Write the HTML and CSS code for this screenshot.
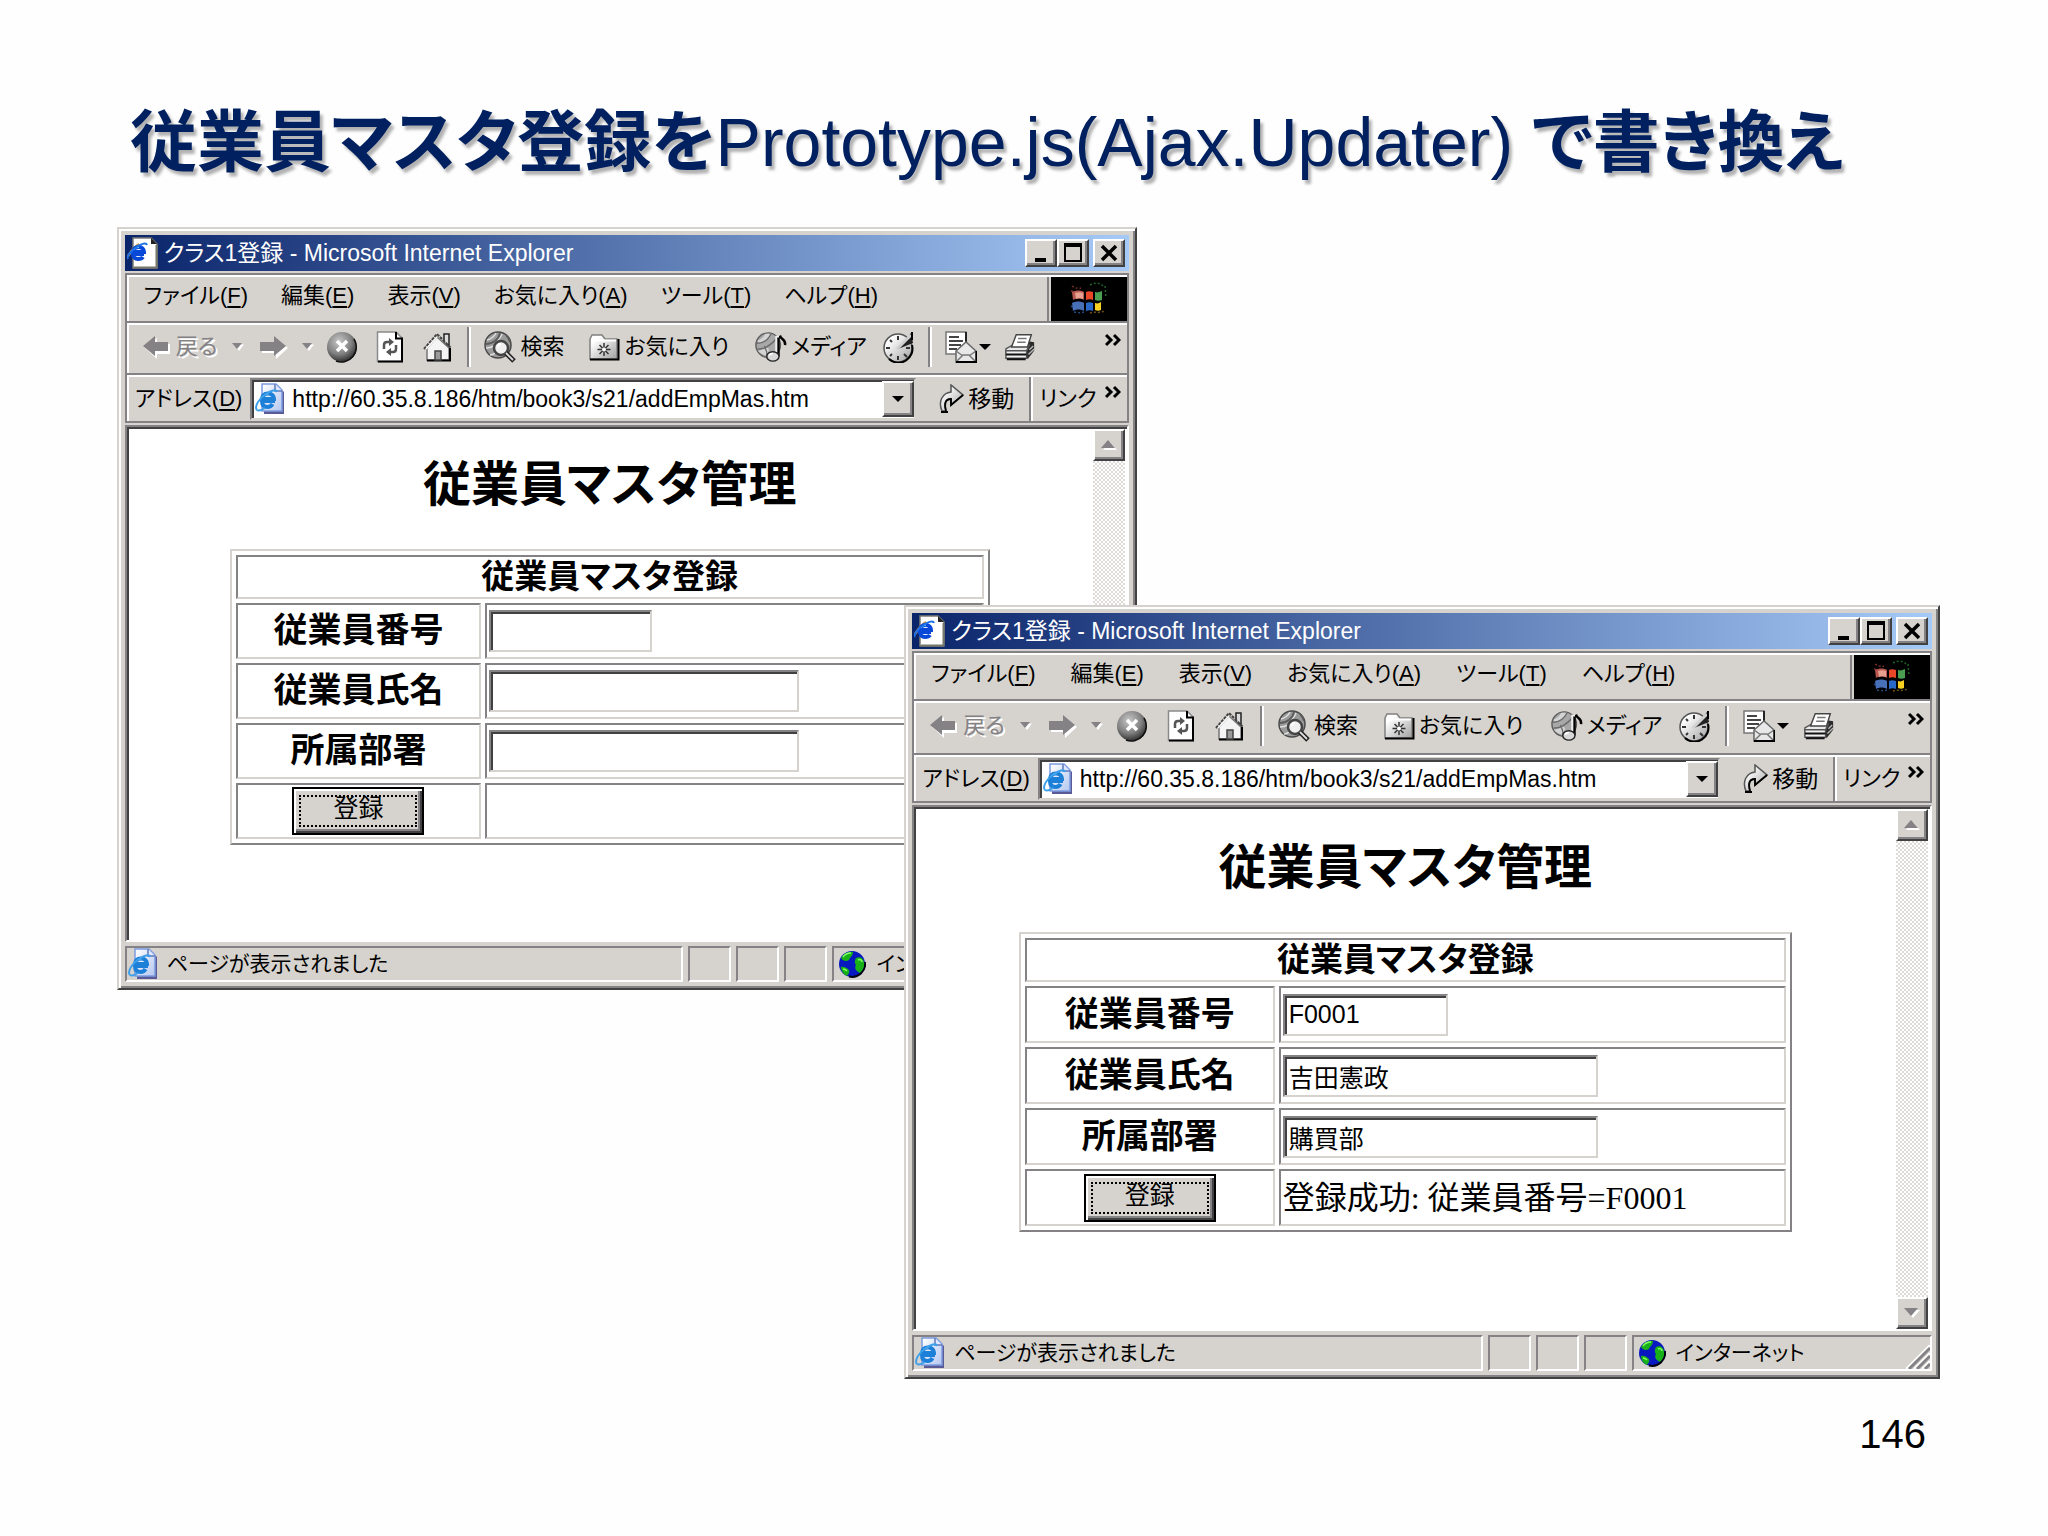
FILE: index.html
```
<!DOCTYPE html>
<html lang="ja">
<head>
    <meta charset="UTF-8">
    <meta name="viewport" content="width=device-width, initial-scale=1.0">
    <title>従業員マスタ登録をPrototype.js(Ajax.Updater) で書き換え</title>
    <link rel="stylesheet" href="styles.css">
</head>
<body>
    <!-- アイコン定義 -->
    <svg class="icon-defs" aria-hidden="true">
        <defs>
            <radialGradient id="ball" cx="40%" cy="32%" r="70%">
                <stop offset="0" stop-color="#c8c8c8"/>
                <stop offset="0.6" stop-color="#808080"/>
                <stop offset="1" stop-color="#2c2c2c"/>
            </radialGradient>
            <linearGradient id="metal" x1="0" y1="0" x2="1" y2="1">
                <stop offset="0.2" stop-color="#ffffff"/>
                <stop offset="1" stop-color="#a0a0a0"/>
            </linearGradient>
            <linearGradient id="sheet" x1="0" y1="0" x2="1" y2="1">
                <stop offset="0" stop-color="#ffffff"/>
                <stop offset="1" stop-color="#b4c6f0"/>
            </linearGradient>
        </defs>
        <symbol id="i-ie" viewBox="0 0 32 32">
            <path d="M10 3h14l6 6v22H10z" fill="#5a5a96"/>
            <path d="M8 1h14l6 6v21H8z" fill="url(#sheet)" stroke="#7c9ce0" stroke-width="1.5"/>
            <path d="M21 1v7h7" fill="#dfe8ff" stroke="#6078b8" stroke-width="1.5"/>
            <path d="M21 18H8c0 4 2 6 5.500 6 2.500 0 4-1 5-3M8 17c0-4 2-6.500 6-6.500s6 2.500 6 5.500H9" fill="none" stroke="#1c7fd8" stroke-width="4"/>
            <path d="M9 14c1-2.500 3-3.500 5.500-3.300" fill="none" stroke="#6cc4ff" stroke-width="1.5"/>
            <path d="M3 27c-3-3 2-12 9-16 5-3.500 10-5 11-2" fill="none" stroke="#3fa0ea" stroke-width="2"/>
            <path d="M3 27c2 1.500 5 0 8-2" fill="none" stroke="#3fa0ea" stroke-width="2"/>
        </symbol>
        <symbol id="i-page" viewBox="0 0 32 32">
            <path d="M6 1h18l6 6v24H6z" fill="#fff" stroke="#7b7b70" stroke-width="1.5"/>
            <path d="M7 30.500h23M29.500 8v22" stroke="#77776a" stroke-width="2"/>
            <path d="M24 1v6h6z" fill="#222"/>
            <path d="M1 19l5-7 6-5" fill="none" stroke="#c89040" stroke-width="2.500"/>
            <path d="M17 17H6c0 3 2 5 5 5 2 0 4-.5 5-2M6 16c0-3.500 2-6 5.500-6s5.500 2 5.500 5H7" fill="none" stroke="#0848d8" stroke-width="4"/>
            <path d="M7 13c1-2 3-3 5-2.500" fill="none" stroke="#5ac0ff" stroke-width="1.5"/>
            <path d="M1 22c-2-3 5-10 10-13 4-2 8-4 9-1" fill="none" stroke="#1c70e8" stroke-width="2"/>
        </symbol>
        <symbol id="i-back" viewBox="0 0 28 24">
            <path d="M2 13L14 3v6h13v10H14v5z" fill="#fff"/>
            <path d="M0 11L12 1v6h13v9H12v5z" fill="#848284"/>
        </symbol>
        <symbol id="i-forward" viewBox="0 0 28 24">
            <path d="M28 13L16 3v6H2v9h14v6z" fill="#fff"/>
            <path d="M26 11L14 1v6H0v9h14v5z" fill="#848284"/>
        </symbol>
        <symbol id="i-caret-off" viewBox="0 0 12 8">
            <path d="M2 1.500h10L7 8z" fill="#fff"/>
            <path d="M0 0h10L5 6z" fill="#848284"/>
        </symbol>
        <symbol id="i-caret" viewBox="0 0 12 8">
            <path d="M0 1h12L6 7z" fill="#000"/>
        </symbol>
        <symbol id="i-stop" viewBox="0 0 32 32">
            <circle cx="16" cy="16" r="15" fill="url(#ball)"/>
            <path d="M28 8a15 15 0 0 1-18 22" fill="none" stroke="#111" stroke-width="1.5"/>
            <path d="M11 10l10 10M21 10L11 20" stroke="#fff" stroke-width="3.500"/>
        </symbol>
        <symbol id="i-refresh" viewBox="0 0 28 32">
            <path d="M1.500 1H20l6 6v23.500H1.500z" fill="#fff" stroke="#8a8a8a" stroke-width="1.500"/>
            <path d="M20 1v6.500h6v23H2" fill="none" stroke="#000" stroke-width="2"/>
            <path d="M8 18v-4c0-2 1-3 3-3h3M20 14v4c0 2-1 3-3 3h-3" fill="none" stroke="#555" stroke-width="2.500"/>
            <path d="M13 7l5 4-5 4zM15 17l-5 4 5 4z" fill="#555"/>
        </symbol>
        <symbol id="i-home" viewBox="0 0 30 32">
            <path d="M21 3h5v11h-5z" fill="#ddd" stroke="#222" stroke-width="1.5"/>
            <path d="M4 17L14 6l12 11v12H4z" fill="#f4f4f4" stroke="#777" stroke-width="1.5"/>
            <path d="M4 29.500h23V17" fill="none" stroke="#000" stroke-width="2"/>
            <path d="M1 18L14 3l14 14" fill="none" stroke="#444" stroke-width="2" stroke-dasharray="3 1"/>
            <path d="M3 18L14 6" stroke="#fff" stroke-width="1.5"/>
            <path d="M12 20h6v9h-6z" fill="#999" stroke="#444" stroke-width="1.500"/>
        </symbol>
        <symbol id="i-search" viewBox="0 0 32 32">
            <circle cx="14" cy="14" r="13" fill="#9a9a9a" stroke="#4a4a4a" stroke-width="1.500"/>
            <path d="M3 9c4-1 7-3 9-7M2 17c4 0 6-1 8-2M6 24c2 0 4-1 5-2M18 3c-1 3-3 5-5 7" fill="none" stroke="#e0e0e0" stroke-width="1.500"/>
            <path d="M2 13c7 0 13-5 14-11M22 4c2 2 3 4 4 7" fill="none" stroke="#5c5c5c" stroke-width="1.800"/>
            <circle cx="17" cy="17" r="7" fill="#f0f0f0" stroke="#444" stroke-width="2.500"/>
            <path d="M14 16c0-2 1-3 3-3" fill="none" stroke="#fff" stroke-width="2"/>
            <path d="M22 22l8 8" stroke="#222" stroke-width="5"/>
            <path d="M22 22l7 7" stroke="#ddd" stroke-width="1.800"/>
        </symbol>
        <symbol id="i-folder" viewBox="0 0 32 28">
            <path d="M2 6l2-4h10l3 4h12v20H2z" fill="url(#metal)" stroke="#808080" stroke-width="1.500"/>
            <path d="M2 26.500h28.500V6" fill="none" stroke="#000" stroke-width="2"/>
            <path d="M3 7.500h25" stroke="#fff" stroke-width="2"/>
            <path d="M16 10v13M9.500 16.500h13M11.500 12l9 9M20.500 12l-9 9" stroke="#333" stroke-width="1.500"/>
            <circle cx="16" cy="16.500" r="2" fill="#fff"/>
        </symbol>
        <symbol id="i-media" viewBox="0 0 34 32">
            <circle cx="14" cy="14" r="13" fill="#a8a8a8" stroke="#5c5c5c" stroke-width="1.500"/>
            <path d="M3 9c3-1 6-3 8-7h6c0 5-6 9-14 10zM3 20c3 0 6-2 7-5l5 3-2 7c-4 0-7-2-10-5z" fill="#d4d4d4"/>
            <path d="M2 12c6 0 12-3 15-10M3 18c6 1 14-4 20-11M10 15c2 4 3 6 3 11" fill="none" stroke="#6a6a6a" stroke-width="1.500"/>
            <path d="M25 26V6l2-1c1 3 6 3 5 9" fill="none" stroke="#000" stroke-width="2.500"/>
            <path d="M22.500 25V5h3" fill="none" stroke="#eee" stroke-width="2"/>
            <ellipse cx="19" cy="26" rx="6.500" ry="5" fill="#d8d8d8" stroke="#222" stroke-width="1.500"/>
            <path d="M15 25c1-2 2-2 4-2" fill="none" stroke="#fff" stroke-width="2"/>
        </symbol>
        <symbol id="i-history" viewBox="0 0 32 32">
            <circle cx="15" cy="17" r="14" fill="url(#metal)" stroke="#555" stroke-width="1.500"/>
            <path d="M29 14a14 14 0 0 1-23 14" fill="none" stroke="#000" stroke-width="2"/>
            <path d="M15 5v4M15 25v4M3 17h4M23 17h4M7 9l2 2M7 25l2-2M21 23l3 3" stroke="#333" stroke-width="2"/>
            <path d="M15 18L28 2l2 10z" fill="#222"/>
            <path d="M14 18L28 4" stroke="#d0d0d0" stroke-width="3"/>
            <path d="M29 1v8" stroke="#000" stroke-width="2"/>
        </symbol>
        <symbol id="i-mail" viewBox="0 0 32 32">
            <path d="M1 1h20v22H1z" fill="#fff" stroke="#777" stroke-width="1.500"/>
            <path d="M4 6h10M4 10h14M4 14h12M4 18h8" stroke="#444" stroke-width="1.800"/>
            <path d="M21 1v12" stroke="#000" stroke-width="1.500"/>
            <path d="M11 20l10-9 10 9v11H11z" fill="#e8e8e8" stroke="#666" stroke-width="1.500"/>
            <path d="M11 31l7-7h6l7 7M11 20l7 5M31 20l-7 5" fill="none" stroke="#777" stroke-width="1.500"/>
            <path d="M11 31h20.500V20" fill="none" stroke="#000" stroke-width="2"/>
        </symbol>
        <symbol id="i-print" viewBox="0 0 34 32">
            <path d="M26 10l6 1v9l-7 9-3-8z" fill="#2a2a2a"/>
            <path d="M2 18l7-4h18l-4 8H2z" fill="#e8e8e8" stroke="#555" stroke-width="1.500"/>
            <path d="M8 16l5-13h16l-4 13z" fill="#fff" stroke="#444" stroke-width="1.500"/>
            <path d="M15 7h9M14 11h9" stroke="#777" stroke-width="1.500"/>
            <path d="M2 20h22v8H2z" fill="#f0f0f0" stroke="#555" stroke-width="1.500"/>
            <path d="M2 24h22M3 29h20" stroke="#111" stroke-width="2"/>
            <path d="M26 24l6-6M27 19l4-4" stroke="#bbb" stroke-width="1.500"/>
        </symbol>
        <symbol id="i-go" viewBox="0 0 26 30">
            <path d="M4 27C0 18 4 9 13 8V1l12 10-12 10v-6c-6 0-7 5-5 12z" fill="url(#metal)" stroke="#555" stroke-width="1.500"/>
            <path d="M25 11L13 21v-6c-6 0-7 5-5 12" fill="none" stroke="#000" stroke-width="1.800"/>
            <path d="M3 28h7" stroke="#000" stroke-width="2"/>
        </symbol>
        <symbol id="i-globe" viewBox="0 0 28 28">
            <circle cx="14" cy="14" r="13" fill="#0818c0"/>
            <path d="M3 8c3-5 8-7 12-6 0 4-3 5-4 8-3 2-6 1-8-2zM18 8c4-2 7 0 8 4 1 5-1 9-4 11-4-2-6-5-4-8-2-3-1-5 0-7zM3 17c3-1 6 1 8 3 1 3-1 4-2 6-3-1-6-5-6-9z" fill="#18b018"/>
            <path d="M5 7c2-3 5-4 8-4M20 10c2-1 4 0 4 2M5 19c2 0 3 1 4 2" fill="none" stroke="#80ff60" stroke-width="1.500"/>
            <path d="M27 12a13 13 0 0 1-16 14.500" fill="none" stroke="#001" stroke-width="2"/>
        </symbol>
        <symbol id="i-flag" viewBox="0 0 38 34">
            <g stroke-width="1.500" stroke-dasharray="2 2" fill="none">
                <path d="M2 4c3 2 6 3 9 2M1 9l4 1" stroke="#803028"/>
                <path d="M1 24l5 3M4 30c5 1 9 1 12-1" stroke="#284880"/>
                <path d="M20 3c5-3 10-2 13 1M35 4l1 12" stroke="#1c6028"/>
                <path d="M20 31c4-2 9 1 14-2" stroke="#705018"/>
            </g>
            <path d="M2 10c4-2 9-2 12 0v8c-3-2-8-2-11 0z" fill="#b85850"/>
            <path d="M5 11c3-1 6-1 8 0v6c-2-1-5-1-7 0z" fill="#e8a090"/>
            <path d="M2 21c4-2 9-2 12 0v8c-3-2-8-2-11 0z" fill="#4870b8"/>
            <path d="M16 10c2-1 4-1 7 0v8c-2-1-5-1-7 0z" fill="#e84828"/>
            <path d="M25 10c3 1 4 0 7-1v9c-2 1-5 1-7 0z" fill="#48a050"/>
            <path d="M16 21c2-1 4-1 7 0v8c-2-1-5-1-7 0z" fill="#2868c8"/>
            <path d="M25 21c3 1 4 0 6-1v8c-2 1-4 1-6 0z" fill="#f8d020"/>
        </symbol>
        <symbol id="i-min" viewBox="0 0 26 22">
            <path d="M7 16h11v4H7z" fill="#000"/>
        </symbol>
        <symbol id="i-max" viewBox="0 0 26 22">
            <path d="M4 1h18v19H4zM6 5v13h14V5z" fill="#000" fill-rule="evenodd"/>
        </symbol>
        <symbol id="i-close" viewBox="0 0 26 22">
            <path d="M6 4l14 14M20 4L6 18" stroke="#000" stroke-width="3.500"/>
        </symbol>
        <symbol id="i-up" viewBox="0 0 16 10">
            <path d="M2 10h14L9 2z" fill="#fff"/>
            <path d="M0 8h14L7 0z" fill="#848284"/>
        </symbol>
        <symbol id="i-down" viewBox="0 0 16 10">
            <path d="M2 2h14L9 10z" fill="#fff"/>
            <path d="M0 0h14L7 8z" fill="#848284"/>
        </symbol>
        <symbol id="i-more" viewBox="0 0 16 14">
            <path d="M1 2l5 5-5 5M9 2l5 5-5 5" fill="none" stroke="#000" stroke-width="3"/>
        </symbol>
        <symbol id="i-grip" viewBox="0 0 24 24">
            <path d="M0 24L24 0M8 24L24 8M16 24l8-8" stroke="#fff" stroke-width="2"/>
            <path d="M3 24L24 3M11 24L24 11M19 24l5-5" stroke="#848284" stroke-width="3"/>
        </symbol>
    </svg>

    <h1 class="slide-title"><b>従業員マスタ登録を</b>Prototype.js(Ajax.Updater) <b>で書き換え</b></h1>

    <main class="desktop">
        <!-- 登録前 -->
        <section class="window window-before">
            <header class="titlebar">
                <svg class="icon"><use href="#i-page"/></svg>
                <h2>クラス1登録 - Microsoft Internet Explorer</h2>
                <button class="bevel ctrl" aria-label="最小化"><svg><use href="#i-min"/></svg></button>
                <button class="bevel ctrl" aria-label="最大化"><svg><use href="#i-max"/></svg></button>
                <button class="bevel ctrl ctrl-close" aria-label="閉じる"><svg><use href="#i-close"/></svg></button>
            </header>
            <div class="bars">
                <div class="bar menubar">
                    <nav class="menu">
                        <a href="#">ファイル(<u>F</u>)</a>
                        <a href="#">編集(<u>E</u>)</a>
                        <a href="#">表示(<u>V</u>)</a>
                        <a href="#">お気に入り(<u>A</u>)</a>
                        <a href="#">ツール(<u>T</u>)</a>
                        <a href="#">ヘルプ(<u>H</u>)</a>
                    </nav>
                    <div class="brand"><svg><use href="#i-flag"/></svg></div>
                </div>
                <div class="bar toolbar">
                    <button class="tool tool-back" disabled><svg class="arrow"><use href="#i-back"/></svg>戻る<svg class="caret"><use href="#i-caret-off"/></svg></button>
                    <button class="tool tool-forward" disabled aria-label="進む"><svg class="arrow"><use href="#i-forward"/></svg><svg class="caret"><use href="#i-caret-off"/></svg></button>
                    <button class="tool" aria-label="中止"><svg class="icon"><use href="#i-stop"/></svg></button>
                    <button class="tool" aria-label="更新"><svg class="icon"><use href="#i-refresh"/></svg></button>
                    <button class="tool" aria-label="ホーム"><svg class="icon"><use href="#i-home"/></svg></button>
                    <span class="divider"></span>
                    <button class="tool tool-search"><svg class="icon"><use href="#i-search"/></svg>検索</button>
                    <button class="tool tool-favorite"><svg class="icon"><use href="#i-folder"/></svg>お気に入り</button>
                    <button class="tool tool-media"><svg class="icon"><use href="#i-media"/></svg>メディア</button>
                    <button class="tool" aria-label="履歴"><svg class="icon"><use href="#i-history"/></svg></button>
                    <span class="divider"></span>
                    <button class="tool tool-mail" aria-label="メール"><svg class="icon"><use href="#i-mail"/></svg><svg class="caret"><use href="#i-caret"/></svg></button>
                    <button class="tool" aria-label="印刷"><svg class="icon"><use href="#i-print"/></svg></button>
                    <button class="more" aria-label="その他"><svg><use href="#i-more"/></svg></button>
                </div>
                <div class="bar addressbar">
                    <label for="url1">アドレス(<u>D</u>)</label>
                    <div class="combo">
                        <svg class="icon"><use href="#i-ie"/></svg>
                        <input type="text" id="url1" value="http://60.35.8.186/htm/book3/s21/addEmpMas.htm">
                        <button class="bevel drop" aria-label="一覧"><svg class="caret"><use href="#i-caret"/></svg></button>
                    </div>
                    <button class="tool go"><svg class="icon"><use href="#i-go"/></svg>移動</button>
                    <div class="links">リンク<button class="more" aria-label="その他"><svg><use href="#i-more"/></svg></button></div>
                </div>
            </div>
            <div class="view">
                <div class="page">
                    <h3>従業員マスタ管理</h3>
                    <table class="form-table">
                        <tr><th colspan="2">従業員マスタ登録</th></tr>
                        <tr><th><label for="no1">従業員番号</label></th><td><input type="text" class="field short" id="no1"></td></tr>
                        <tr><th><label for="name1">従業員氏名</label></th><td><input type="text" class="field" id="name1"></td></tr>
                        <tr><th><label for="dept1">所属部署</label></th><td><input type="text" class="field" id="dept1"></td></tr>
                        <tr><th><button class="submit"><span>登録</span></button></th><td></td></tr>
                    </table>
                </div>
                <div class="scrollbar">
                    <button class="bevel" aria-label="上へ"><svg><use href="#i-up"/></svg></button>
                    <button class="bevel" aria-label="下へ"><svg><use href="#i-down"/></svg></button>
                </div>
            </div>
            <footer class="statusbar">
                <div class="pane message"><svg class="icon"><use href="#i-ie"/></svg>ページが表示されました</div>
                <div class="pane"></div>
                <div class="pane"></div>
                <div class="pane"></div>
                <div class="pane zone"><svg class="icon"><use href="#i-globe"/></svg>インターネット<svg class="grip"><use href="#i-grip"/></svg></div>
            </footer>
        </section>

        <!-- 登録後 -->
        <section class="window window-after">
            <header class="titlebar">
                <svg class="icon"><use href="#i-page"/></svg>
                <h2>クラス1登録 - Microsoft Internet Explorer</h2>
                <button class="bevel ctrl" aria-label="最小化"><svg><use href="#i-min"/></svg></button>
                <button class="bevel ctrl" aria-label="最大化"><svg><use href="#i-max"/></svg></button>
                <button class="bevel ctrl ctrl-close" aria-label="閉じる"><svg><use href="#i-close"/></svg></button>
            </header>
            <div class="bars">
                <div class="bar menubar">
                    <nav class="menu">
                        <a href="#">ファイル(<u>F</u>)</a>
                        <a href="#">編集(<u>E</u>)</a>
                        <a href="#">表示(<u>V</u>)</a>
                        <a href="#">お気に入り(<u>A</u>)</a>
                        <a href="#">ツール(<u>T</u>)</a>
                        <a href="#">ヘルプ(<u>H</u>)</a>
                    </nav>
                    <div class="brand"><svg><use href="#i-flag"/></svg></div>
                </div>
                <div class="bar toolbar">
                    <button class="tool tool-back" disabled><svg class="arrow"><use href="#i-back"/></svg>戻る<svg class="caret"><use href="#i-caret-off"/></svg></button>
                    <button class="tool tool-forward" disabled aria-label="進む"><svg class="arrow"><use href="#i-forward"/></svg><svg class="caret"><use href="#i-caret-off"/></svg></button>
                    <button class="tool" aria-label="中止"><svg class="icon"><use href="#i-stop"/></svg></button>
                    <button class="tool" aria-label="更新"><svg class="icon"><use href="#i-refresh"/></svg></button>
                    <button class="tool" aria-label="ホーム"><svg class="icon"><use href="#i-home"/></svg></button>
                    <span class="divider"></span>
                    <button class="tool tool-search"><svg class="icon"><use href="#i-search"/></svg>検索</button>
                    <button class="tool tool-favorite"><svg class="icon"><use href="#i-folder"/></svg>お気に入り</button>
                    <button class="tool tool-media"><svg class="icon"><use href="#i-media"/></svg>メディア</button>
                    <button class="tool" aria-label="履歴"><svg class="icon"><use href="#i-history"/></svg></button>
                    <span class="divider"></span>
                    <button class="tool tool-mail" aria-label="メール"><svg class="icon"><use href="#i-mail"/></svg><svg class="caret"><use href="#i-caret"/></svg></button>
                    <button class="tool" aria-label="印刷"><svg class="icon"><use href="#i-print"/></svg></button>
                    <button class="more" aria-label="その他"><svg><use href="#i-more"/></svg></button>
                </div>
                <div class="bar addressbar">
                    <label for="url2">アドレス(<u>D</u>)</label>
                    <div class="combo">
                        <svg class="icon"><use href="#i-ie"/></svg>
                        <input type="text" id="url2" value="http://60.35.8.186/htm/book3/s21/addEmpMas.htm">
                        <button class="bevel drop" aria-label="一覧"><svg class="caret"><use href="#i-caret"/></svg></button>
                    </div>
                    <button class="tool go"><svg class="icon"><use href="#i-go"/></svg>移動</button>
                    <div class="links">リンク<button class="more" aria-label="その他"><svg><use href="#i-more"/></svg></button></div>
                </div>
            </div>
            <div class="view">
                <div class="page">
                    <h3>従業員マスタ管理</h3>
                    <table class="form-table">
                        <tr><th colspan="2">従業員マスタ登録</th></tr>
                        <tr><th><label for="no2">従業員番号</label></th><td><input type="text" class="field short" id="no2" value="F0001"></td></tr>
                        <tr><th><label for="name2">従業員氏名</label></th><td><input type="text" class="field" id="name2" value="吉田憲政"></td></tr>
                        <tr><th><label for="dept2">所属部署</label></th><td><input type="text" class="field" id="dept2" value="購買部"></td></tr>
                        <tr><th><button class="submit"><span>登録</span></button></th><td>登録成功: 従業員番号=F0001</td></tr>
                    </table>
                </div>
                <div class="scrollbar">
                    <button class="bevel" aria-label="上へ"><svg><use href="#i-up"/></svg></button>
                    <button class="bevel" aria-label="下へ"><svg><use href="#i-down"/></svg></button>
                </div>
            </div>
            <footer class="statusbar">
                <div class="pane message"><svg class="icon"><use href="#i-ie"/></svg>ページが表示されました</div>
                <div class="pane"></div>
                <div class="pane"></div>
                <div class="pane"></div>
                <div class="pane zone"><svg class="icon"><use href="#i-globe"/></svg>インターネット<svg class="grip"><use href="#i-grip"/></svg></div>
            </footer>
        </section>
    </main>

    <footer class="page-number">146</footer>
</body>
</html>
```
FILE: styles.css
```
* {
    margin: 0;
    padding: 0;
    box-sizing: border-box;
}

body {
    font-family: "Liberation Sans", "Noto Sans CJK JP", sans-serif;
    background: #fefefe;
    color: #000;
    min-height: 100vh;
    display: flex;
    flex-direction: column;
}

button,
input {
    font: inherit;
    color: inherit;
}

button {
    border: none;
    background: none;
}

.icon-defs {
    position: absolute;
    width: 0;
    height: 0;
}

.slide-title {
    padding: 92px 130px 34px;
    font-size: 68px;
    line-height: 100px;
    font-weight: normal;
    font-feature-settings: "palt";
    color: #002060;
    text-shadow: 3px 4px 3px rgba(0, 0, 0, 0.3);
    white-space: nowrap;
}

.slide-title b {
    font-size: 67px;
}

.desktop {
    flex: 1;
    position: relative;
}

/* ウィンドウ */
.window {
    position: absolute;
    padding: 6px;
    background: #d6d3ce;
    border: 2px solid;
    border-color: #d6d3ce #424142 #424142 #d6d3ce;
    box-shadow: inset 2px 2px #fff, inset -2px -2px #848284;
    font-size: 22px;
    line-height: 28px;
    font-feature-settings: "palt";
    white-space: nowrap;
}

.window-before {
    left: 5.7%;
    top: 0;
    width: 49.8%;
    --menu-gap: 33px;
    --gap: 16px;
    --toolbar: 52px;
    --view: 517px;
    --page-top: 32px;
    --row: 56px;
}

.window-after {
    left: 44.15%;
    top: 378px;
    width: 50.6%;
    --menu-gap: 35px;
    --gap: 17px;
    --toolbar: 54px;
    --view: 526px;
    --page-top: 35px;
    --row: 57px;
}

.bevel {
    display: flex;
    align-items: center;
    justify-content: center;
    background: #d6d3ce;
    border: 2px solid;
    border-color: #fff #424142 #424142 #fff;
    box-shadow: inset -2px -2px #848284;
}

.icon {
    width: 32px;
    height: 32px;
    flex: none;
}

.caret {
    width: 12px;
    height: 8px;
    flex: none;
}

/* タイトルバー */
.titlebar {
    display: flex;
    align-items: center;
    height: 36px;
    padding: 0 4px 0 2px;
    background: linear-gradient(90deg, #0a246a, #a6caf7);
    color: #fff;
}

.titlebar h2 {
    flex: 1;
    padding-left: 5px;
    font-size: 23px;
    font-weight: normal;
}

.ctrl {
    width: 32px;
    height: 28px;
}

.ctrl svg {
    width: 26px;
    height: 22px;
}

.ctrl-close {
    margin-left: 4px;
}

/* メニュー・ツールバー */
.bars {
    margin-top: 2px;
    border: 2px solid #848284;
}

.bar {
    display: flex;
    align-items: center;
    border-top: 2px solid #fff;
    border-left: 2px solid #fff;
}

.bar + .bar {
    box-shadow: 0 -2px #848284;
    margin-top: 2px;
}

.menubar {
    height: 46px;
}

.menu {
    flex: 1;
    display: flex;
    align-self: stretch;
    gap: var(--menu-gap);
    padding: 5px 0 0 15px;
    border-right: 2px solid #848284;
}

.menu a {
    color: inherit;
    text-decoration: none;
}

u {
    text-underline-offset: 3px;
}

.brand {
    display: flex;
    align-items: center;
    justify-content: center;
    align-self: stretch;
    width: 76px;
    margin-left: 2px;
    background: #000;
}

.brand svg {
    width: 38px;
    height: 34px;
}

.toolbar {
    height: calc(var(--toolbar) - 2px);
    gap: var(--gap);
    padding: 0 4px 4px 14px;
}

.tool {
    display: flex;
    align-items: center;
    gap: 4px;
}

.arrow {
    width: 28px;
    height: 24px;
}

.tool-back {
    gap: 5px;
    color: #848284;
    text-shadow: 2px 2px #fff;
}

.tool-back .caret,
.tool-forward .caret {
    margin-left: 10px;
}

.tool-forward {
    margin-right: -4px;
}

.tool-favorite {
    margin-left: 8px;
}

.tool-media {
    margin-left: 10px;
}

.tool-mail {
    gap: 2px;
    margin-right: -3px;
}

.divider {
    width: 4px;
    height: 40px;
    margin: 0 -3px;
    background: #fff;
    border-left: 2px solid #848284;
}

.more {
    margin-left: auto;
    width: 16px;
    height: 28px;
    display: flex;
    align-items: flex-start;
}

.more svg {
    width: 16px;
    height: 14px;
}

.toolbar .more {
    margin-right: 2px;
}

/* アドレスバー */
.addressbar {
    height: 46px;
    padding-left: 6px;
}

.combo {
    flex: 1;
    display: flex;
    align-items: center;
    height: 42px;
    margin-left: 8px;
    padding-left: 2px;
    background: #fff;
    border: 2px solid;
    border-color: #848284 #d6d3ce #d6d3ce #848284;
    box-shadow: inset 2px 2px #424142;
}

.combo input {
    flex: 1;
    min-width: 0;
    padding-left: 6px;
    border: none;
    background: none;
    outline: none;
    font-size: 23px;
}

.drop {
    width: 32px;
    height: 36px;
}

.go {
    height: 44px;
    padding: 0 15px 0 22px;
    border-right: 2px solid #848284;
    font-size: 23px;
}

.go .icon {
    width: 26px;
    height: 30px;
}

.links {
    display: flex;
    align-items: center;
    gap: 8px;
    height: 44px;
    padding: 0 6px;
    border-left: 2px solid #fff;
}

/* 表示領域 */
.view {
    display: flex;
    min-height: var(--view);
    margin-top: 2px;
    background: #fff;
    border: 2px solid;
    border-color: #848284 #fff #fff #848284;
    box-shadow: inset 2px 2px #424142;
}

.page {
    flex: 1;
    padding: var(--page-top) 2px 0 2px;
}

.page h3 {
    font-size: 48px;
    line-height: 52px;
    text-align: center;
}

.form-table {
    width: 79%;
    margin: 38px auto 0;
    border: 2px solid;
    border-color: #d6d3ce #848284 #848284 #d6d3ce;
    border-collapse: separate;
    border-spacing: 4px;
    font-family: "Liberation Serif", "Noto Sans CJK JP", serif;
    font-size: 32px;
    line-height: 38px;
}

.form-table th,
.form-table td {
    height: var(--row);
    border: 2px solid;
    border-color: #848284 #d6d3ce #d6d3ce #848284;
    text-align: center;
}

.form-table th {
    width: 33%;
    font-size: 34px;
}

.form-table tr:first-child th {
    height: 44px;
    font-size: 33px;
}

.form-table td {
    padding-left: 2px;
    text-align: left;
}

.field {
    display: block;
    width: 63%;
    height: 42px;
    padding: 0 4px;
    border: 2px solid;
    border-color: #848284 #d6d3ce #d6d3ce #848284;
    box-shadow: inset 2px 2px #424142;
    font-family: "Liberation Sans", "Noto Sans CJK JP", sans-serif;
    font-size: 25px;
    outline: none;
}

.field.short {
    width: 33%;
}

.submit {
    display: block;
    width: 132px;
    height: 48px;
    margin: 0 auto;
    padding: 5px;
    background: #d6d3ce;
    border: 2px solid #000;
    box-shadow: inset 2px 2px #fff, inset -2px -2px #424142, inset -4px -4px #848284;
    font-size: 25px;
    font-weight: normal;
    line-height: 24px;
}

.submit span {
    display: block;
    height: 32px;
    border: 2px dotted #000;
}

/* スクロールバー */
.scrollbar {
    display: flex;
    flex-direction: column;
    justify-content: space-between;
    width: 32px;
    margin: 2px 2px 0 0;
    background: repeating-conic-gradient(#fff 0 25%, #dedbd7 0 50%) 0 0 / 4px 4px;
}

.scrollbar .bevel {
    height: 32px;
}

.scrollbar svg {
    width: 16px;
    height: 10px;
}

/* ステータスバー */
.statusbar {
    display: flex;
    gap: 5px;
    margin-top: 4px;
    font-size: 21px;
}

.pane {
    display: flex;
    align-items: center;
    width: 43px;
    height: 36px;
    border: 2px solid;
    border-color: #848284 #fff #fff #848284;
}

.message {
    flex: 1;
    gap: 8px;
}

.zone {
    width: 29.5%;
    gap: 10px;
    padding-left: 4px;
}

.zone .icon {
    width: 28px;
    height: 28px;
}

.grip {
    width: 24px;
    height: 24px;
    margin-left: auto;
    align-self: flex-end;
}

.page-number {
    padding: 0 122px 78px;
    font-size: 40px;
    line-height: 48px;
    text-align: right;
}
```
